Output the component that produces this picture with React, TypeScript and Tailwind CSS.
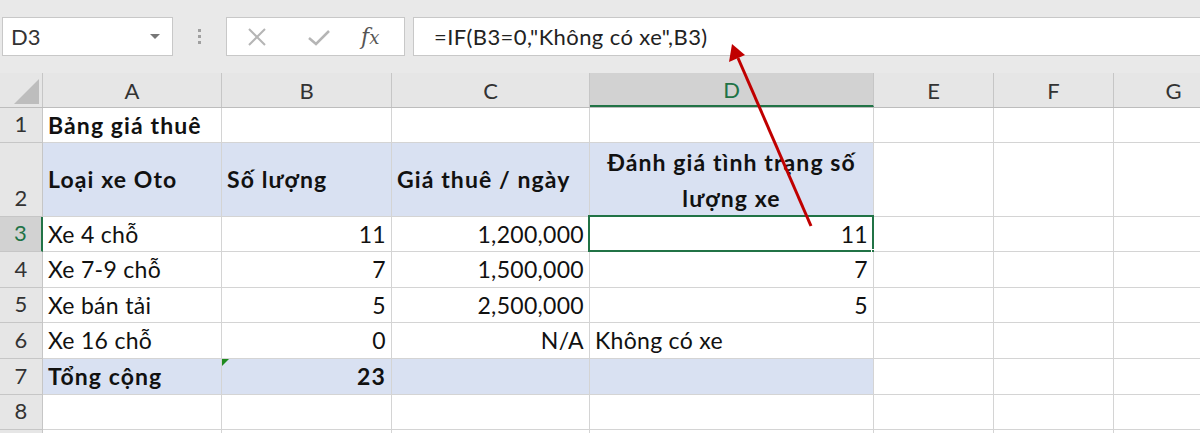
import React from 'react';

type Align = 'left' | 'right' | 'center';

interface CellDef {
  text?: string;
  align?: Align;
  bold?: boolean;
  fill?: boolean;
  wrap?: boolean;
  selected?: boolean;
  flag?: boolean;
}

const COLS = [179, 170, 198, 284, 120, 120, 120];
const LETTERS = ['A', 'B', 'C', 'D', 'E', 'F', 'G'];

const ROWS: { h: number; cells: CellDef[] }[] = [
  { h: 35, cells: [{ text: 'Bảng giá thuê', bold: true }] },
  {
    h: 74,
    cells: [
      { text: 'Loại xe Oto', bold: true, fill: true },
      { text: 'Số lượng', bold: true, fill: true },
      { text: 'Giá thuê / ngày', bold: true, fill: true },
      { text: 'Đánh giá tình trạng số lượng xe', bold: true, fill: true, wrap: true, align: 'center' },
    ],
  },
  {
    h: 35,
    cells: [
      { text: 'Xe 4 chỗ' },
      { text: '11', align: 'right' },
      { text: '1,200,000', align: 'right' },
      { text: '11', align: 'right', selected: true },
    ],
  },
  {
    h: 36,
    cells: [
      { text: 'Xe 7-9 chỗ' },
      { text: '7', align: 'right' },
      { text: '1,500,000', align: 'right' },
      { text: '7', align: 'right' },
    ],
  },
  {
    h: 35,
    cells: [
      { text: 'Xe bán tải' },
      { text: '5', align: 'right' },
      { text: '2,500,000', align: 'right' },
      { text: '5', align: 'right' },
    ],
  },
  {
    h: 36,
    cells: [
      { text: 'Xe 16 chỗ' },
      { text: '0', align: 'right' },
      { text: 'N/A', align: 'right' },
      { text: 'Không có xe' },
    ],
  },
  {
    h: 36,
    cells: [
      { text: 'Tổng cộng', bold: true, fill: true },
      { text: '23', bold: true, fill: true, align: 'right', flag: true },
      { fill: true },
      { fill: true },
    ],
  },
  { h: 35, cells: [] },
  { h: 35, cells: [] },
];

function Cell({ def, width }: { def: CellDef; width: number }) {
  const justify =
    def.align === 'right' ? 'justify-end text-right' : def.align === 'center' ? 'justify-center text-center' : 'justify-start text-left';
  return (
    <div
      className={`relative flex h-full shrink-0 items-center border-r border-b border-[#d4d4d4] px-[5px] ${justify} ${
        def.fill ? 'bg-[#d9e1f2]' : 'bg-white'
      }`}
      style={{ width }}
    >
      {def.text && (
        <span
          className={`${def.bold ? 'font-bold tracking-[1.1px]' : 'tracking-[0.3px]'} ${
            def.wrap ? 'leading-[36px]' : 'whitespace-nowrap'
          } text-[#111]`}
        >
          {def.text}
        </span>
      )}
      {def.flag && (
        <div className="absolute top-0 left-0 h-0 w-0 border-t-[7px] border-r-[7px] border-t-[#1e8a1e] border-r-transparent" />
      )}
      {def.selected && (
        <>
          <div className="pointer-events-none absolute -top-[2px] -left-[2px] h-[37px] w-[286px] border-2 border-[#217346]" />
          <div className="absolute -right-[4px] -bottom-[4px] h-[6px] w-[6px] border border-white bg-[#217346]" />
        </>
      )}
    </div>
  );
}

export default function App() {
  return (
    <div className="relative h-[433px] w-[1200px] overflow-hidden bg-white font-['Lato','Liberation_Sans',sans-serif] text-[23px]">
      {/* formula bar */}
      <div className="flex h-[73px] items-start bg-[#e9e9e9] pt-[17px]">
        <div className="ml-[2px] flex h-[39px] w-[171px] items-center justify-between border border-[#c8c8c8] bg-white pr-[12px] pl-[8px]">
          <span className="text-[22px] text-[#333]">D3</span>
          <div className="h-0 w-0 border-x-[5px] border-t-[5px] border-x-transparent border-t-[#777]" />
        </div>
        <div className="flex h-[39px] w-[53px] flex-col items-center justify-center gap-[3px]">
          <div className="h-[3px] w-[3px] bg-[#a0a0a0]" />
          <div className="h-[3px] w-[3px] bg-[#a0a0a0]" />
          <div className="h-[3px] w-[3px] bg-[#a0a0a0]" />
        </div>
        <div className="flex h-[39px] w-[179px] items-center border border-[#c8c8c8] bg-white">
          <svg width="22" height="22" viewBox="0 0 22 22" className="ml-[19px]">
            <path d="M3 3 L19 19 M19 3 L3 19" stroke="#b5b5b5" strokeWidth="2" fill="none" />
          </svg>
          <svg width="24" height="20" viewBox="0 0 24 20" className="ml-[39px]">
            <path d="M2 11 L9 17 L22 4" stroke="#b5b5b5" strokeWidth="2.5" fill="none" />
          </svg>
          <span className="ml-[30px] font-['DejaVu_Serif',serif] text-[22px] italic text-[#555]">
            f<span className="text-[18px]">x</span>
          </span>
        </div>
        <div className="ml-[8px] flex h-[39px] flex-1 items-center border border-r-0 border-[#c8c8c8] bg-white pl-[20px]">
          <span className="text-[22px] tracking-[0.4px] text-[#222]">=IF(B3=0,"Không có xe",B3)</span>
        </div>
      </div>

      {/* column headers */}
      <div className="flex h-[35px] border-b border-[#bdbdbd] bg-[#e6e6e6]">
        <div className="relative h-full w-[43px] shrink-0 border-r border-[#c6c6c6]">
          <div className="absolute right-[3px] bottom-[3px] h-0 w-0 border-b-[25px] border-l-[25px] border-b-[#bdbdbd] border-l-transparent" />
        </div>
        {COLS.map((w, i) => (
          <div
            key={LETTERS[i]}
            className={`flex h-full shrink-0 items-center justify-center border-r border-[#c6c6c6] text-[22px] ${
              i === 3 ? 'border-b-2 border-b-[#217346] bg-[#d2d2d2] text-[#217346]' : 'text-[#333]'
            }`}
            style={{ width: w }}
          >
            {LETTERS[i]}
          </div>
        ))}
      </div>

      {/* rows */}
      {ROWS.map((row, r) => (
        <div key={r} className="flex" style={{ height: row.h }}>
          <div
            className={`flex h-full w-[43px] shrink-0 items-end justify-center border-b border-[#c6c6c6] pb-[2px] text-[22px] ${
              r === 2 ? 'border-r-2 border-r-[#217346] bg-[#d2d2d2] text-[#217346]' : 'border-r border-r-[#c6c6c6] bg-[#e6e6e6] text-[#333]'
            }`}
          >
            {r < 8 ? r + 1 : ''}
          </div>
          {COLS.map((w, c) => (
            <Cell key={c} def={row.cells[c] ?? {}} width={w} />
          ))}
        </div>
      ))}

      {/* annotation arrow */}
      <svg className="pointer-events-none absolute top-0 left-0" width="1200" height="433">
        <line x1="811" y1="226" x2="738" y2="58" stroke="#c00000" strokeWidth="3" />
        <polygon points="732,44 729,62 745,55" fill="#c00000" />
      </svg>
    </div>
  );
}
